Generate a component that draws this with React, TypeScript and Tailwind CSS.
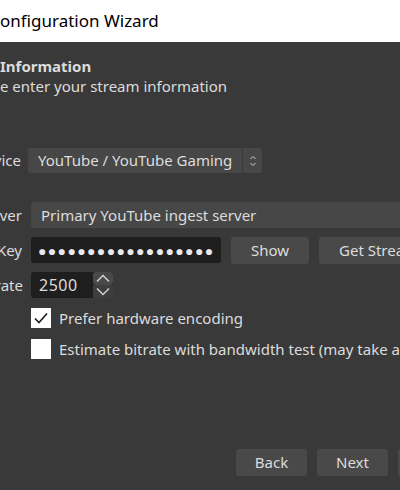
import React from 'react';

const font = { fontFamily: '"Noto Sans", "Open Sans", sans-serif' };

// Right-aligned label clipped at the left edge of the window
const Label: React.FC<{ text: string; w?: string }> = ({ text, w = 'w-[22px]' }) => (
  <div className={`${w} shrink-0 overflow-hidden flex justify-end`}>
    <span className="whitespace-nowrap text-[15px] text-[#dcdcdc]">{text}</span>
  </div>
);

const Button: React.FC<{ children: React.ReactNode; className?: string }> = ({ children, className = '' }) => (
  <div className={`h-[27px] shrink-0 flex items-center justify-center rounded-[3px] bg-[#4a4949] text-[15px] text-[#dcdcdc] ${className}`}>
    {children}
  </div>
);

const Check: React.FC<{ checked?: boolean; label: string }> = ({ checked, label }) => (
  <div className="flex items-center h-[20px]">
    <div className="w-[20px] h-[20px] bg-white flex items-center justify-center shrink-0">
      {checked && (
        <svg width="16" height="16" viewBox="0 0 16 16" fill="none">
          <path d="M2 8.5 L6 12.5 L14 3.5" stroke="#1e1e1e" strokeWidth="1.6" />
        </svg>
      )}
    </div>
    <span className="ml-[8px] whitespace-nowrap text-[15px] text-[#dcdcdc]">{label}</span>
  </div>
);

export default function App() {
  return (
    <div style={font} className="w-[400px] h-[490px] overflow-hidden flex flex-col bg-[#3a3939]">
      {/* title bar */}
      <div className="h-[42px] shrink-0 bg-white flex items-center">
        <span className="whitespace-nowrap text-[17px] text-black leading-none -mt-[2px]">onfiguration Wizard</span>
      </div>

      <div className="flex-1 flex flex-col pt-[14px]">
        <div className="text-[15px] leading-[20px] font-bold text-[#dcdcdc] whitespace-nowrap">Information</div>
        <div className="text-[15px] leading-[20px] text-[#dcdcdc] whitespace-nowrap">e enter your stream information</div>

        {/* service */}
        <div className="mt-[52px] flex items-center h-[25px]">
          <Label text="Service" w="w-[21px]" />
          <div className="ml-[7px] h-[25px] w-[234px] flex rounded-[3px] bg-[#484747] overflow-hidden">
            <div className="flex-1 flex items-center pl-[10px] text-[15px] text-[#dcdcdc] whitespace-nowrap">YouTube / YouTube Gaming</div>
            <div className="w-[20px] border-l border-[#3a3939] flex items-center justify-center">
              <svg width="10" height="16" viewBox="0 0 10 16" fill="none" stroke="#cfcfcf" strokeWidth="1">
                <path d="M2.5 6 L5 3.5 L7.5 6" />
                <path d="M2.5 10 L5 12.5 L7.5 10" />
              </svg>
            </div>
          </div>
        </div>

        {/* server */}
        <div className="mt-[29px] flex items-center h-[26px]">
          <Label text="Server" />
          <div className="ml-[9px] h-[26px] flex-1 flex items-center pl-[10px] rounded-l-[3px] bg-[#484747] text-[15px] text-[#dcdcdc] whitespace-nowrap">
            Primary YouTube ingest server
          </div>
        </div>

        {/* stream key */}
        <div className="mt-[9px] flex items-center h-[26px]">
          <Label text="Stream Key" />
          <div className="ml-[9px] h-[26px] w-[190px] shrink-0 flex items-center pl-[7px] rounded-[3px] bg-[#1f1e1e] overflow-hidden">
            <span className="whitespace-nowrap text-[14px] tracking-[1.35px] text-[#e8e8ee]">●●●●●●●●●●●●●●●●●●</span>
          </div>
          <Button className="ml-[10px] w-[78px]">Show</Button>
          <Button className="ml-[10px] w-[100px] rounded-r-none justify-start pl-[20px] whitespace-nowrap overflow-hidden">Get Stream Key</Button>
        </div>

        {/* bitrate */}
        <div className="mt-[9px] flex items-center h-[26px]">
          <Label text="Bitrate" w="w-[23px]" />
          <div className="ml-[8px] h-[26px] w-[62px] flex items-center pl-[8px] rounded-l-[3px] bg-[#1f1e1e] text-[16px] tracking-[0.5px] text-[#dcdcdc]">2500</div>
          <div className="h-[26px] w-[20px] flex flex-col bg-[#1f1e1e] rounded-r-[3px] overflow-hidden">
            <div className="h-[13px] bg-[#4a4949] rounded-[3px] flex items-center justify-center">
              <svg width="16" height="11" viewBox="0 0 16 11" fill="none" stroke="#d0d0d0" strokeWidth="1.5">
                <path d="M2 8.5 L8 2.5 L14 8.5" />
              </svg>
            </div>
            <div className="h-[13px] bg-[#3f3e3e] flex items-center justify-center">
              <svg width="16" height="11" viewBox="0 0 16 11" fill="none" stroke="#d0d0d0" strokeWidth="1.5">
                <path d="M2 2.5 L8 8.5 L14 2.5" />
              </svg>
            </div>
          </div>
        </div>

        <div className="mt-[10px] pl-[31px] flex flex-col gap-[11px]">
          <Check checked label="Prefer hardware encoding" />
          <Check label="Estimate bitrate with bandwidth test (may take a few minutes)" />
        </div>

        <div className="mt-[90px] flex pl-[236px] gap-[10px]">
          <Button className="w-[71px]">Back</Button>
          <Button className="w-[71px]">Next</Button>
          <Button className="w-[71px]">Cancel</Button>
        </div>
      </div>
    </div>
  );
}
